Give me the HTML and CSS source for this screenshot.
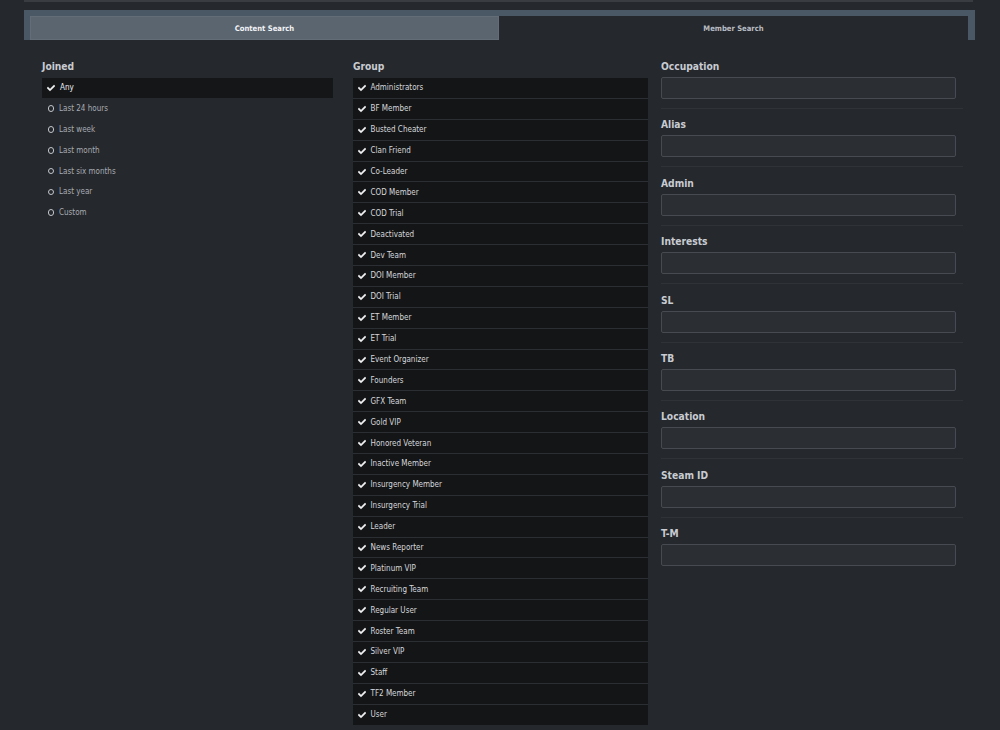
FILE: index.html
```html
<!DOCTYPE html>
<html>
<head>
<meta charset="utf-8">
<title>Member Search</title>
<link rel="stylesheet" href="styles.css">
</head>
<body>
<div class="page">
  <div class="topline"></div>
  <div class="tabs">
    <div class="tab tab-active">Content Search</div>
    <div class="tab">Member Search</div>
  </div>

  <div class="columns">
    <section class="col">
      <h3 class="head">Joined</h3>
      <ul class="radios">
        <li class="radio selected"><svg class="chk" viewBox="0 0 512 512"><path d="M173.9 439.4l-166.4-166.4c-10-10-10-26.2 0-36.2l36.2-36.2c10-10 26.2-10 36.2 0L192 312.7 432.1 72.6c10-10 26.2-10 36.2 0l36.2 36.2c10 10 10 26.2 0 36.2l-294.4 294.4c-10 10-26.2 10-36.2 0z"/></svg>Any</li>
        <li class="radio"><span class="ring"></span>Last 24 hours</li>
        <li class="radio"><span class="ring"></span>Last week</li>
        <li class="radio"><span class="ring"></span>Last month</li>
        <li class="radio"><span class="ring"></span>Last six months</li>
        <li class="radio"><span class="ring"></span>Last year</li>
        <li class="radio"><span class="ring"></span>Custom</li>
      </ul>
    </section>

    <section class="col">
      <h3 class="head">Group</h3>
      <ul class="groups" id="groups"></ul>
    </section>

    <section class="col fields">
      <div class="field"><h3 class="head">Occupation</h3><input class="box" type="text"></div>
      <div class="field"><h3 class="head">Alias</h3><input class="box" type="text"></div>
      <div class="field"><h3 class="head">Admin</h3><input class="box" type="text"></div>
      <div class="field"><h3 class="head">Interests</h3><input class="box" type="text"></div>
      <div class="field"><h3 class="head">SL</h3><input class="box" type="text"></div>
      <div class="field"><h3 class="head">TB</h3><input class="box" type="text"></div>
      <div class="field"><h3 class="head">Location</h3><input class="box" type="text"></div>
      <div class="field"><h3 class="head">Steam ID</h3><input class="box" type="text"></div>
      <div class="field last"><h3 class="head">T-M</h3><input class="box" type="text"></div>
    </section>
  </div>
</div>
<script src="app.js"></script>
</body>
</html>
```

FILE: styles.css
```css
html, body {
  margin: 0;
  padding: 0;
  background: #25282d;
}

body {
  font-family: "DejaVu Sans Condensed", "DejaVu Sans", sans-serif;
  font-size: 8px;
  color: #c9ccd1;
}

.page {
  width: 951px;
  margin-left: 24px;
}

.topline {
  height: 2px;
  background: #393c41;
  margin-right: 2px;
}

.tabs {
  margin-top: 8px;
  height: 24px;
  display: flex;
  border-top: 6px solid #4a5764;
  border-left: 6px solid #4a5764;
  border-right: 7px solid #4a5764;
}

.tab {
  flex: 1;
  display: flex;
  align-items: center;
  justify-content: center;
  padding-top: 1px;
  font-weight: bold;
  font-size: 7.6px;
  color: #b9bdc3;
  background: #25282d;
}

.tab-active {
  background: #5a6570;
  box-shadow: inset 0 0 0 1px #626d78;
  color: #f2f3f5;
}

.columns {
  display: grid;
  grid-template-columns: 291px 295px 295px;
  column-gap: 20px;
  margin-left: 18px;
  padding-top: 20px;
}

.columns .col:nth-child(3) {
  margin-left: -7px;
}

.head {
  margin: 0 0 4px 0;
  font-family: "DejaVu Sans Condensed", "DejaVu Sans", sans-serif;
  font-weight: bold;
  font-size: 10.2px;
  line-height: 14px;
  color: #c8ccd2;
}

ul {
  list-style: none;
  margin: 0;
  padding: 0;
}

.radios .radio {
  height: 19.8px;
  margin-bottom: 1px;
  display: flex;
  align-items: center;
  padding-left: 5px;
  color: #a7abb1;
}

.radios .selected {
  background: #151618;
  color: #eceef0;
}

.chk {
  width: 8px;
  height: 8px;
  fill: #f1f2f3;
  stroke: #f1f2f3;
  stroke-width: 28;
  stroke-linejoin: round;
  margin-right: 5px;
  flex: none;
}

.ring {
  width: 4.5px;
  height: 4.5px;
  border: 1.8px solid #c3c6ca;
  border-radius: 50%;
  margin-left: 0.5px;
  margin-right: 5px;
  flex: none;
}

.groups {
  background: #2b2e32;
}

.groups li {
  height: 19.9px;
  margin-bottom: 1px;
  display: flex;
  align-items: center;
  padding-left: 5px;
  background: #141517;
  color: #d6d8db;
}

.groups li:last-child {
  margin-bottom: 0;
}

.groups .chk {
  margin-right: 4.5px;
}

.field {
  padding-bottom: 9px;
  border-bottom: 1px solid #2f3237;
  margin-bottom: 9.4px;
}

.field .head {
  margin-bottom: 3px;
}

.field.last {
  border-bottom: 0;
}

.box {
  display: block;
  box-sizing: border-box;
  width: 295px;
  height: 22px;
  margin: 0;
  padding: 0 6px;
  background: #2b2e33;
  border: 1px solid #474b51;
  border-radius: 2px;
  color: #d6d8db;
  font-family: inherit;
  font-size: 8px;
  outline: none;
}
```

FILE: app.js
```js
// Member group list, each one ticked
const groups = [
  "Administrators", "BF Member", "Busted Cheater", "Clan Friend", "Co-Leader",
  "COD Member", "COD Trial", "Deactivated", "Dev Team", "DOI Member",
  "DOI Trial", "ET Member", "ET Trial", "Event Organizer", "Founders",
  "GFX Team", "Gold VIP", "Honored Veteran", "Inactive Member", "Insurgency Member",
  "Insurgency Trial", "Leader", "News Reporter", "Platinum VIP", "Recruiting Team",
  "Regular User", "Roster Team", "Silver VIP", "Staff", "TF2 Member", "User"
];

const check = '<svg class="chk" viewBox="0 0 512 512"><path d="M173.9 439.4l-166.4-166.4c-10-10-10-26.2 0-36.2l36.2-36.2c10-10 26.2-10 36.2 0L192 312.7 432.1 72.6c10-10 26.2-10 36.2 0l36.2 36.2c10 10 10 26.2 0 36.2l-294.4 294.4c-10 10-26.2 10-36.2 0z"/></svg>';

const list = document.getElementById("groups");
list.innerHTML = groups.map(g => "<li>" + check + g + "</li>").join("");
```
